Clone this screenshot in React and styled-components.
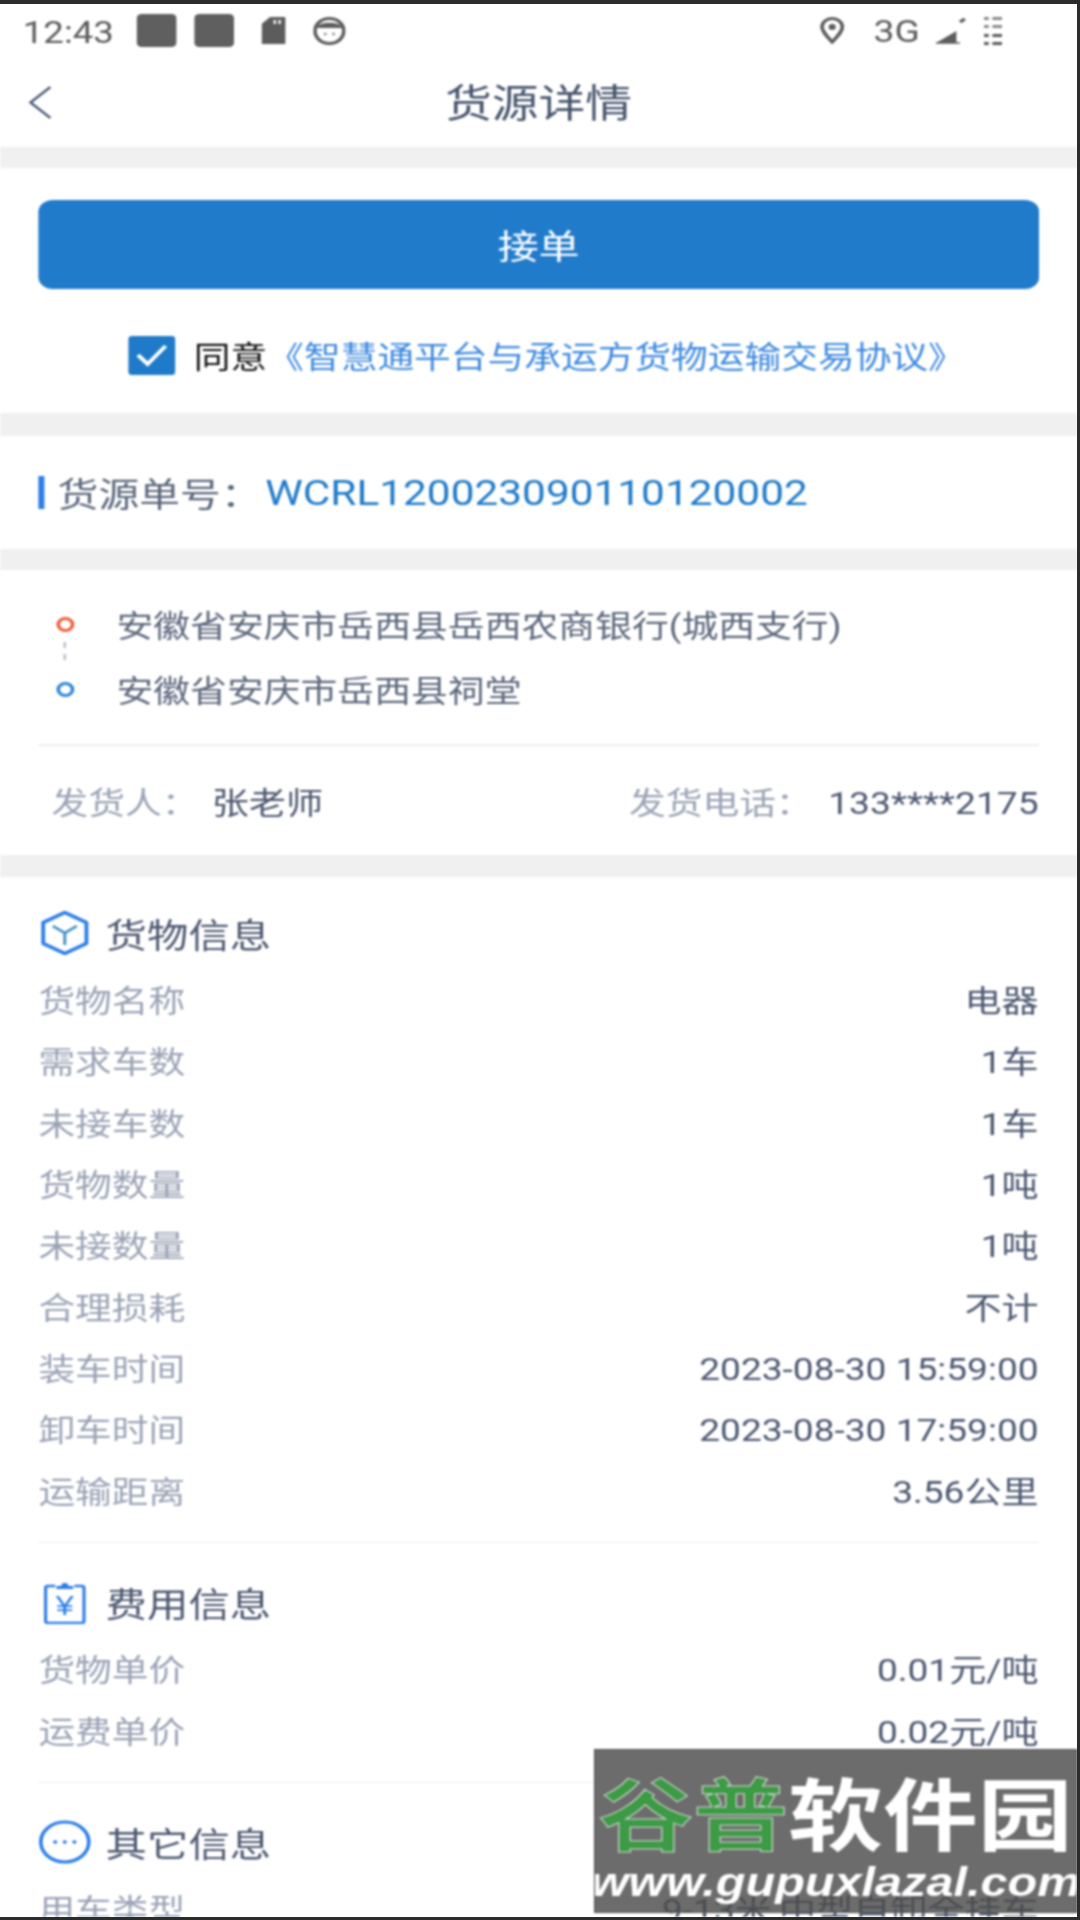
import React from 'react';
import styled, { createGlobalStyle } from 'styled-components';

const goods = [
  ['货物名称', '电器'],
  ['需求车数', '1车'],
  ['未接车数', '1车'],
  ['货物数量', '1吨'],
  ['未接数量', '1吨'],
  ['合理损耗', '不计'],
  ['装车时间', '2023-08-30 15:59:00'],
  ['卸车时间', '2023-08-30 17:59:00'],
  ['运输距离', '3.56公里'],
];

const fees = [
  ['货物单价', '0.01元/吨'],
  ['运费单价', '0.02元/吨'],
];

const others = [['用车类型', '9-13米,中型自卸全挂车']];

const App = () => (
  <Frame>
    <GlobalStyle />
    <Stretch>
      <StatusBar>
        <StatusGroup>
          <Time>12:43</Time>
          <AppIcons>
            <AppIcon />
            <AppIcon />
          </AppIcons>
          <svg width="20" height="27" viewBox="0 0 20 27">
            <path d="M7 0H19a1 1 0 0 1 1 1V27H0V7Z" fill="#5c5c5c" />
            <path d="M10 3h2v4h-2zM14 3h2v4h-2z" fill="#fff" />
          </svg>
          <svg width="27" height="28" viewBox="0 0 27 28">
            <ellipse cx="13.5" cy="14" rx="12" ry="12.5" fill="#fff" stroke="#5c5c5c" strokeWidth="3" />
            <path d="M3 11C4 4 23 4 24 11Z" fill="#5c5c5c" />
            <circle cx="10" cy="17" r="1.3" fill="#8a8a8a" />
            <circle cx="17" cy="17" r="1.3" fill="#8a8a8a" />
          </svg>
        </StatusGroup>
        <StatusRight>
          <svg width="21" height="27" viewBox="0 0 21 27">
            <path d="M10.5 25C5 18 2 14 2 10a8.5 8.5 0 0 1 17 0c0 4-3 8-8.5 15Z" fill="none" stroke="#5c5c5c" strokeWidth="3" />
            <circle cx="10.5" cy="10" r="3" fill="#5c5c5c" />
          </svg>
          <Network>3G</Network>
          <svg width="27" height="27" viewBox="0 0 27 27">
            <path d="M1 26 18 14V26Z" fill="#5c5c5c" />
            <path d="M1 26H21" stroke="#5c5c5c" strokeWidth="1.5" />
            <path d="M21 5 25 2" stroke="#5c5c5c" strokeWidth="3" />
          </svg>
          <DotsIcon width="15" height="28" viewBox="0 0 15 28" fill="#8a8a8a">
            <path d="M0 0h4v3H0zM7 0h8v3H7zM0 8h4v3H0zM7 8h8v3H7z" />
            <path d="M0 17h4v3H0zM7 17h8v3H7zM0 25h4v3H0zM7 25h8v3H7z" fill="#5c5c5c" />
          </DotsIcon>
        </StatusRight>
      </StatusBar>

      <Nav>
        <BackIcon width="19" height="33" viewBox="0 0 19 33">
          <path d="M18 1 1.5 16.5 18 32" fill="none" stroke="#4a5a78" strokeWidth="2.4" />
        </BackIcon>
        <Title>货源详情</Title>
      </Nav>

      <Band />

      <ActionSection>
        <AcceptButton>接单</AcceptButton>
        <AgreeRow>
          <CheckBox>
            <svg width="29" height="25" viewBox="0 0 29 25">
              <path d="M3 12 11 21 26 3" fill="none" stroke="#fff" strokeWidth="3.5" />
            </svg>
          </CheckBox>
          <AgreeText>同意</AgreeText>
          <AgreeLink>《智慧通平台与承运方货物运输交易协议》</AgreeLink>
        </AgreeRow>
      </ActionSection>

      <Band $height={23} />

      <OrderSection>
        <OrderMark />
        <OrderLabel>货源单号：</OrderLabel>
        <OrderValue>WCRL120023090110120002</OrderValue>
      </OrderSection>

      <Band />

      <RouteSection>
        <RouteRow>
          <RouteDot $color="#ef5f3c" $connected />
          <RouteText>安徽省安庆市岳西县岳西农商银行(城西支行)</RouteText>
        </RouteRow>
        <RouteRow>
          <RouteDot $color="#2f86d6" />
          <RouteText>安徽省安庆市岳西县祠堂</RouteText>
        </RouteRow>
        <Divider />
        <SenderRow>
          <SenderPair $gap={11}>
            <SenderLabel>发货人：</SenderLabel>
            <SenderValue>张老师</SenderValue>
          </SenderPair>
          <SenderPair $gap={13}>
            <SenderLabel>发货电话：</SenderLabel>
            <SenderValue>133****2175</SenderValue>
          </SenderPair>
        </SenderRow>
      </RouteSection>

      <Band $height={22} />

      <InfoSection>
        <InfoBlock title="货物信息" icon={<CubeIcon />} rows={goods} $first />
        <Divider />
        <InfoBlock title="费用信息" icon={<FeeIcon />} rows={fees} />
        <Divider />
        <InfoBlock title="其它信息" icon={<MoreIcon />} rows={others} />
      </InfoSection>

      <Watermark>
        <BrandName>
          <BrandGreen>谷普</BrandGreen>软件园
        </BrandName>
        <BrandUrl>www.gupuxlazal.com</BrandUrl>
      </Watermark>
    </Stretch>
  </Frame>
);

const InfoBlock = ({ title, icon, rows, $first }) => (
  <Block $first={$first}>
    <BlockHeading>
      {icon}
      <BlockTitle>{title}</BlockTitle>
    </BlockHeading>
    {rows.map(([label, value]) => (
      <InfoRow key={label}>
        <InfoLabel>{label}</InfoLabel>
        <InfoValue>{value}</InfoValue>
      </InfoRow>
    ))}
  </Block>
);

const CubeIcon = () => (
  <svg width="44" height="44" viewBox="0 0 44 44" fill="none">
    <path d="M22 1.5 40 11.5V32.5L22 42.5 4 32.5V11.5Z" stroke="#2b7de9" strokeWidth="3.2" strokeLinejoin="round" />
    <path d="M12 15 22 22 32 15M22 22V34" stroke="#3f8fc9" strokeWidth="2.4" />
  </svg>
);

const FeeIcon = () => (
  <svg width="44" height="44" viewBox="0 0 44 44" fill="none">
    <path d="M14 6H8a2 2 0 0 0-2 2V41a2 2 0 0 0 2 2H36a2 2 0 0 0 2-2V8a2 2 0 0 0-2-2H30" stroke="#2b7de9" strokeWidth="2.6" />
    <path d="M15 9V6h4a3 3 0 0 1 6 0h4v3Z" fill="#2b7de9" />
    <FeeSign x="22" y="35" textAnchor="middle">¥</FeeSign>
  </svg>
);

const MoreIcon = () => (
  <svg width="44" height="44" viewBox="0 0 44 44" fill="none">
    <circle cx="22" cy="22" r="20" stroke="#2b7de9" strokeWidth="3" />
    <circle cx="14" cy="22" r="1.8" fill="#2b7de9" />
    <circle cx="22" cy="22" r="1.8" fill="#2b7de9" />
    <circle cx="30" cy="22" r="1.8" fill="#2b7de9" />
  </svg>
);

const GlobalStyle = createGlobalStyle`
  html, body {
    margin: 0;
    padding: 0;
    background: #fff;
  }
  body {
    font-family: Roboto, "Noto Sans CJK SC", sans-serif;
  }
`;

const Frame = styled.div`
  box-sizing: border-box;
  width: 1080px;
  height: 1920px;
  overflow: hidden;
  background: #fff;
  border-top: 4px solid #2c2c2c;
  border-right: 3px solid #2c2c2c;
  border-bottom: 3px solid #2c2c2c;
`;

/* the screenshot itself is a blurred capture, stretched sideways by 1.2 */
const Stretch = styled.div`
  position: relative;
  width: 897.5px;
  height: 1913px;
  overflow: hidden;
  transform: scaleX(1.2);
  transform-origin: left top;
  filter: blur(0.8px);
`;

const StatusBar = styled.div`
  display: flex;
  align-items: center;
  justify-content: space-between;
  height: 53px;
  padding: 0 63px 0 19px;
  color: #5c5c5c;
`;

const StatusGroup = styled.div`
  display: flex;
  align-items: center;
  gap: 23px;
`;

const StatusRight = styled(StatusGroup)`
  gap: 10px;
`;

const Time = styled.span`
  margin-top: 3px;
  font-size: 30.5px;
`;

const Network = styled.span`
  margin: 2px 2px 0 14px;
  font-size: 31px;
`;

const DotsIcon = styled.svg`
  margin-left: 4px;
`;

const AppIcons = styled.div`
  display: flex;
  gap: 15px;
  margin-left: -4px;
`;

const AppIcon = styled.div`
  width: 33px;
  height: 33px;
  border-radius: 4px;
  background: #5f5f5f;
`;

const Nav = styled.div`
  position: relative;
  display: flex;
  align-items: center;
  justify-content: center;
  box-sizing: border-box;
  height: 90px;
  padding-bottom: 4px;
`;

const BackIcon = styled.svg`
  position: absolute;
  left: 24px;
  top: 29px;
`;

const Title = styled.h1`
  margin: 0;
  font-size: 39px;
  font-weight: 400;
  color: #46546c;
`;

const Band = styled.div`
  height: ${props => props.$height || 21}px;
  background: #f0f0f0;
`;

const ActionSection = styled.section`
  display: flex;
  flex-direction: column;
  height: 245px;
  box-sizing: border-box;
  padding: 32px 32px 0;
`;

const AcceptButton = styled.button`
  height: 89px;
  border: 0;
  border-radius: 12px;
  background: #217bcb;
  color: #fff;
  font-family: inherit;
  font-size: 34px;
`;

const AgreeRow = styled.div`
  display: flex;
  align-items: center;
  justify-content: center;
  margin: 44px 0 0 13px;
`;

const CheckBox = styled.div`
  display: flex;
  align-items: center;
  justify-content: center;
  width: 39px;
  height: 39px;
  margin-right: 16px;
  border-radius: 3px;
  background: #1f7bc9;
`;

const AgreeText = styled.span`
  font-size: 30.6px;
  color: #111;
`;

const AgreeLink = styled.span`
  font-size: 30.6px;
  color: #3f8ae0;
`;

const OrderSection = styled.section`
  display: flex;
  align-items: center;
  height: 113px;
  padding: 0 32px;
`;

const OrderMark = styled.div`
  width: 4.5px;
  height: 33px;
  margin-right: 11.5px;
  background: #2b7de9;
`;

const OrderLabel = styled.span`
  font-size: 34px;
  color: #5b677b;
`;

const OrderValue = styled.span`
  margin-left: 3px;
  font-size: 35.3px;
  color: #1f7bc9;
`;

const RouteSection = styled.section`
  padding: 22px 32px 0;
  height: 285px;
  box-sizing: border-box;
`;

const RouteRow = styled.div`
  display: flex;
  align-items: center;
  height: 65px;
`;

const RouteDot = styled.div`
  position: relative;
  box-sizing: border-box;
  width: 15px;
  height: 15px;
  margin: 0 35px 0 15px;
  border: 3.5px solid ${props => props.$color};
  border-radius: 50%;

  ${props => props.$connected && `
    &::after {
      content: '';
      position: absolute;
      left: 2.5px;
      top: 22px;
      height: 18px;
      border-left: 2px dashed #b5bcc8;
    }
  `}
`;

const RouteText = styled.span`
  margin-top: -2px;
  font-size: 30.7px;
  color: #5b677b;
`;

const Divider = styled.div`
  height: 1.5px;
  margin-top: 22px;
  background: #eeeeee;
`;

const SenderRow = styled.div`
  display: flex;
  align-items: center;
  justify-content: space-between;
  box-sizing: border-box;
  height: 112px;
  padding: 5px 0 0 11px;
  line-height: 40px;
`;

const SenderPair = styled.div`
  display: flex;
  align-items: center;
  gap: ${props => props.$gap}px;
`;

const SenderLabel = styled.span`
  font-size: 30.6px;
  color: #9aa3b5;
`;

const SenderValue = styled.span`
  font-size: 31px;
  color: #4c5870;
`;

const InfoSection = styled.section`
  padding: 0 32px;
`;

const Block = styled.div`
  padding-top: ${props => (props.$first ? 34 : 37)}px;
`;

const BlockHeading = styled.div`
  display: flex;
  align-items: center;
  gap: 12px;
  height: 44px;
  margin-bottom: 13px;
`;

const BlockTitle = styled.h2`
  margin: 0;
  font-size: 34.5px;
  font-weight: 400;
  color: #4c5870;
`;

const FeeSign = styled.text`
  font-family: "Liberation Sans", sans-serif;
  font-size: 27px;
  fill: #2b7de9;
`;

const InfoRow = styled.div`
  display: flex;
  align-items: center;
  justify-content: space-between;
  box-sizing: border-box;
  height: 61.3px;
  padding-top: 7px;
  font-size: 30.6px;
  line-height: 40px;
`;

const InfoLabel = styled.span`
  color: #9aa3b5;
`;

const InfoValue = styled.span`
  font-size: 30.9px;
  color: #4c5870;
`;

const Watermark = styled.div`
  position: absolute;
  right: 0;
  bottom: 4px;
  box-sizing: border-box;
  display: flex;
  flex-direction: column;
  align-items: center;
  width: 402.5px;
  height: 164px;
  border: 1px solid #555;
  background: rgba(76, 76, 76, 0.82);
  color: #fff;
  overflow: hidden;
`;

const BrandName = styled.div`
  margin-top: 11px;
  font-family: "Noto Sans CJK SC", sans-serif;
  font-size: 79px;
  font-weight: 700;
  line-height: 100px;
  white-space: nowrap;
`;

const BrandGreen = styled.span`
  color: #3d9a45;
  -webkit-text-stroke: 1px #cfd8cf;
`;

const BrandUrl = styled.div`
  margin-top: -2px;
  font-family: "Liberation Sans", sans-serif;
  font-size: 40.5px;
  font-weight: 700;
  font-style: italic;
  line-height: 46px;
  white-space: nowrap;
`;

export default App;
